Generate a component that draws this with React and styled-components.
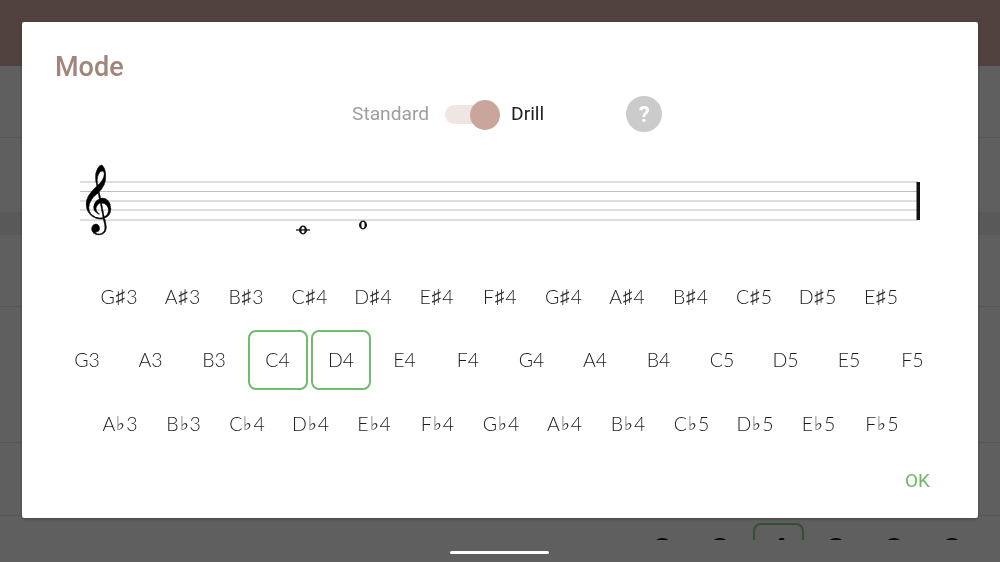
import styled, { createGlobalStyle } from "styled-components";

const sharps = ["G♯3", "A♯3", "B♯3", "C♯4", "D♯4", "E♯4", "F♯4", "G♯4", "A♯4", "B♯4", "C♯5", "D♯5", "E♯5"];
const naturals = ["G3", "A3", "B3", "C4", "D4", "E4", "F4", "G4", "A4", "B4", "C5", "D5", "E5", "F5"];
const flats = ["A♭3", "B♭3", "C♭4", "D♭4", "E♭4", "F♭4", "G♭4", "A♭4", "B♭4", "C♭5", "D♭5", "E♭5", "F♭5"];
const selected = ["C4", "D4"];
const peeks = ["3", "8", "4", "8", "8", "8"];

const GlobalStyle = createGlobalStyle`
    html, body {
        margin: 0;
        padding: 0;
        height: 100%;
        overflow: hidden;
        background: #5f5f5f;
        font-family: "Roboto", "Liberation Sans", sans-serif;
    }
`;

const Page = styled.div`
    position: relative;
    width: 1000px;
    height: 562px;
    overflow: hidden;
    display: flex;
    flex-direction: column;
    background: #5f5f5f;
`;

const TopBar = styled.div`
    height: 66px;
    background: #52423f;
    flex: none;
`;

const BackRow = styled.div`
    height: ${(p) => p.$h}px;
    flex: none;
    background: ${(p) => p.$bg || "#5f5f5f"};
    border-bottom: ${(p) => (p.$line ? "1px solid #555" : "none")};
    box-sizing: border-box;
`;

const PeekRow = styled.div`
    height: 24px;
    flex: none;
    display: flex;
    padding-left: 633px;
    overflow: hidden;
`;

const PeekCell = styled.div`
    width: 58px;
    height: 52px;
    margin-top: 7px;
    box-sizing: border-box;
    display: flex;
    align-items: center;
    justify-content: center;
    font-family: "Lato", sans-serif;
    font-weight: 700;
    font-size: 35px;
    color: #0a0a0a;
    position: relative;
`;

const PeekBox = styled.div`
    position: absolute;
    left: 4px;
    right: 3px;
    top: 0;
    height: 60px;
    box-sizing: border-box;
    border: 2px solid #2f5230;
    border-radius: 8px;
`;

const NavBar = styled.div`
    flex: 1;
    display: flex;
    justify-content: center;
    align-items: flex-end;
    padding-bottom: 8px;
`;

const HomeBar = styled.div`
    width: 99px;
    height: 3px;
    border-radius: 2px;
    background: #fff;
    margin-left: -1px;
`;

const Dialog = styled.div`
    position: absolute;
    left: 22px;
    top: 22px;
    width: 956px;
    height: 496px;
    box-sizing: border-box;
    background: #fff;
    border-radius: 2px;
    box-shadow: 0 1px 3px rgba(0, 0, 0, 0.3);
    display: flex;
    flex-direction: column;
    will-change: transform;
`;

const Title = styled.h2`
    margin: 0;
    padding: 30px 0 0 33px;
    height: 60px;
    box-sizing: border-box;
    font-size: 27px;
    line-height: 30px;
    font-weight: 500;
    color: #a1857d;
`;

const ModeRow = styled.div`
    height: 36px;
    margin-top: 14px;
    display: flex;
    align-items: center;
    padding-left: 330px;
    font-size: 19.2px;
`;

const ModeLabel = styled.span`
    margin-bottom: 2px;
    color: ${(p) => (p.$active ? "#222" : "#9e9e9e")};
`;

const Toggle = styled.div`
    position: relative;
    width: 52px;
    height: 19px;
    margin: 0 14px 0 16px;
    border-radius: 10px;
    background: #efe5e2;
`;

const Knob = styled.div`
    position: absolute;
    right: -3px;
    top: -5px;
    width: 30px;
    height: 30px;
    border-radius: 50%;
    background: #c9a59b;
`;

const Help = styled.div`
    width: 36px;
    height: 36px;
    margin-left: 82px;
    border-radius: 50%;
    background: #cbcbcb;
    color: #fff;
    font-weight: 700;
    font-size: 22px;
    display: flex;
    align-items: center;
    justify-content: center;
`;

const Staff = styled.svg`
    display: block;
    width: 956px;
    height: 90px;
    margin-top: 28px;
    flex: none;
`;

const NoteRows = styled.div`
    margin-top: 16px;
    display: flex;
    flex-direction: column;
    gap: 3.5px;
`;

const NoteRow = styled.div`
    display: flex;
    padding-left: ${(p) => p.$inset}px;
`;

const Note = styled.div`
    width: 60px;
    height: 60px;
    margin-right: 3.5px;
    flex: none;
    box-sizing: border-box;
    border: 2px solid ${(p) => (p.$on ? "#73bb6c" : "transparent")};
    border-radius: 8px;
    display: flex;
    align-items: center;
    justify-content: center;
    font-family: "Lato", "DejaVu Sans", sans-serif;
    font-weight: 300;
    font-size: 19.5px;
    color: #1c1c1c;
`;

const Accidental = styled.span`
    font-family: "DejaVu Sans", sans-serif;
    font-size: 19px;
    margin: 0 1px;
    color: #333;
`;

const Actions = styled.div`
    margin-top: 16px;
    display: flex;
    justify-content: flex-end;
    padding-right: 48px;
`;

const OkButton = styled.button`
    border: none;
    background: none;
    padding: 0;
    font-family: inherit;
    font-size: 19px;
    font-weight: 400;
    color: #6dbb68;
`;

const WholeNote = ({ x, y, ledger }) => (
    <g>
        {ledger && <line x1={x - 7} x2={x + 7} y1={y} y2={y} stroke="#111" strokeWidth="1.3" />}
        <ellipse cx={x} cy={y} rx="4" ry="4.4" fill="#111" />
        <ellipse cx={x} cy={y} rx="1.6" ry="3.2" fill="#fff" />
        {ledger && <line x1={x - 2} x2={x + 2} y1={y} y2={y} stroke="#111" strokeWidth="1.3" />}
    </g>
);

const staffLines = [22, 31.5, 41, 50, 60];

const NoteName = ({ name }) => (
    <>
        {name[0]}
        <Accidental>{name[1]}</Accidental>
        {name[2]}
    </>
);

const App = () => {
    return (
        <Page>
            <GlobalStyle />
            <TopBar />
            <BackRow $h={72} $line />
            <BackRow $h={74} />
            <BackRow $h={23} $bg="#595959" />
            <BackRow $h={72} $line />
            <BackRow $h={136} $line />
            <BackRow $h={73} $line />
            <PeekRow>
                {peeks.map((p, i) => (
                    <PeekCell key={i}>
                        {i === 2 && <PeekBox />}
                        {p}
                    </PeekCell>
                ))}
            </PeekRow>
            <NavBar>
                <HomeBar />
            </NavBar>
            <Dialog>
                <Title>Mode</Title>
                <ModeRow>
                    <ModeLabel>Standard</ModeLabel>
                    <Toggle>
                        <Knob />
                    </Toggle>
                    <ModeLabel $active>Drill</ModeLabel>
                    <Help>?</Help>
                </ModeRow>
                <Staff viewBox="0 0 956 90">
                    {staffLines.map((y) => (
                        <line key={y} x1="58" x2="896" y1={y} y2={y} stroke="#bdbdbd" strokeWidth="1" />
                    ))}
                    <rect x="894.5" y="22" width="3.5" height="38" fill="#111" />
                    <text x="57" y="58" fontFamily="DejaVu Sans" fontSize="59" fill="#000" stroke="#000" strokeWidth="0.4">𝄞</text>
                    <WholeNote x={281} y={70} ledger />
                    <WholeNote x={341} y={65} />
                </Staff>
                <NoteRows>
                    <NoteRow $inset={67}>
                        {sharps.map((n) => <Note key={n}><NoteName name={n} /></Note>)}
                    </NoteRow>
                    <NoteRow $inset={35}>
                        {naturals.map((n) => <Note key={n} $on={selected.includes(n)}>{n}</Note>)}
                    </NoteRow>
                    <NoteRow $inset={68}>
                        {flats.map((n) => <Note key={n}><NoteName name={n} /></Note>)}
                    </NoteRow>
                </NoteRows>
                <Actions>
                    <OkButton>OK</OkButton>
                </Actions>
            </Dialog>
        </Page>
    );
};

export default App;
